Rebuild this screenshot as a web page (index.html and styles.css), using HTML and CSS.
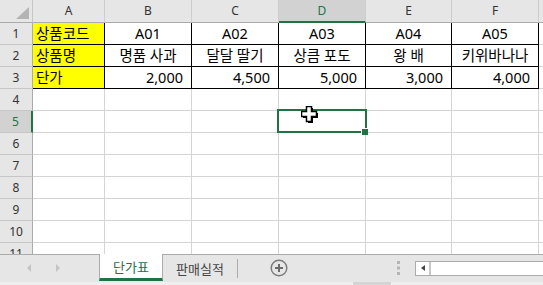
FILE: index.html
```html
<!DOCTYPE html>
<html lang="ko">
  <head>
    <meta charset="UTF-8">
    <title>단가표</title>
    <link rel="stylesheet" href="styles.css">
  </head>
  <body>
    <div class="sheet">
      <div class="grid">
        <div class="corner"><span class="tri"></span></div>
        <div class="col-h">A</div>
        <div class="col-h">B</div>
        <div class="col-h">C</div>
        <div class="col-h sel">D</div>
        <div class="col-h">E</div>
        <div class="col-h">F</div>
        <div class="col-h"></div>

        <div class="row-h">1</div>
        <div class="cell box key">상품코드</div>
        <div class="cell box mid">A01</div>
        <div class="cell box mid">A02</div>
        <div class="cell box mid">A03</div>
        <div class="cell box mid">A04</div>
        <div class="cell box mid">A05</div>
        <div class="cell"></div>

        <div class="row-h">2</div>
        <div class="cell box key">상품명</div>
        <div class="cell box mid">명품 사과</div>
        <div class="cell box mid">달달 딸기</div>
        <div class="cell box mid">상큼 포도</div>
        <div class="cell box mid">왕 배</div>
        <div class="cell box mid">키위바나나</div>
        <div class="cell"></div>

        <div class="row-h">3</div>
        <div class="cell box key">단가</div>
        <div class="cell box num">2,000</div>
        <div class="cell box num">4,500</div>
        <div class="cell box num">5,000</div>
        <div class="cell box num">3,000</div>
        <div class="cell box num">4,000</div>
        <div class="cell"></div>

        <div class="row-h">4</div>
        <div class="cell"></div><div class="cell"></div><div class="cell"></div><div class="cell"></div>
        <div class="cell"></div><div class="cell"></div><div class="cell"></div>

        <div class="row-h sel">5</div>
        <div class="cell"></div><div class="cell"></div><div class="cell"></div><div class="cell"></div>
        <div class="cell"></div><div class="cell"></div><div class="cell"></div>

        <div class="row-h">6</div>
        <div class="cell"></div><div class="cell"></div><div class="cell"></div><div class="cell"></div>
        <div class="cell"></div><div class="cell"></div><div class="cell"></div>

        <div class="row-h">7</div>
        <div class="cell"></div><div class="cell"></div><div class="cell"></div><div class="cell"></div>
        <div class="cell"></div><div class="cell"></div><div class="cell"></div>

        <div class="row-h">8</div>
        <div class="cell"></div><div class="cell"></div><div class="cell"></div><div class="cell"></div>
        <div class="cell"></div><div class="cell"></div><div class="cell"></div>

        <div class="row-h">9</div>
        <div class="cell"></div><div class="cell"></div><div class="cell"></div><div class="cell"></div>
        <div class="cell"></div><div class="cell"></div><div class="cell"></div>

        <div class="row-h">10</div>
        <div class="cell"></div><div class="cell"></div><div class="cell"></div><div class="cell"></div>
        <div class="cell"></div><div class="cell"></div><div class="cell"></div>

        <div class="row-h">11</div>
        <div class="cell"></div><div class="cell"></div><div class="cell"></div><div class="cell"></div>
        <div class="cell"></div><div class="cell"></div><div class="cell"></div>
      </div>

      <!-- active cell D5 -->
      <div class="selection"></div>
      <div class="handle"></div>
      <svg class="cursor" width="19" height="19" viewBox="0 0 19 19">
        <polygon points="7,2 12,2 12,7 17,7 17,12 12,12 12,17 7,17 7,12 2,12 2,7 7,7" fill="#000"/>
        <polygon points="5.5,0.5 10.5,0.5 10.5,5.5 15.5,5.5 15.5,10.5 10.5,10.5 10.5,15.5 5.5,15.5 5.5,10.5 0.5,10.5 0.5,5.5 5.5,5.5" fill="#fff" stroke="#000" stroke-width="1.5"/>
      </svg>

      <div class="tabbar">
        <div class="tabrow">
          <div class="nav">
            <span class="arrow-left"></span>
            <span class="arrow-right"></span>
          </div>
          <div class="tab active">단가표</div>
          <div class="tab">판매실적</div>
          <div class="sep"></div>
          <svg class="add" width="18" height="18" viewBox="0 0 18 18">
            <circle cx="9" cy="9" r="7.8" fill="none" stroke="#7a7a7a" stroke-width="1.4"/>
            <path d="M9 5v8M5 9h8" stroke="#6a6a6a" stroke-width="2"/>
          </svg>
          <svg class="dots" width="3" height="14" viewBox="0 0 3 14">
            <rect x="0" y="0" width="3" height="3" fill="#b5b5b5"/>
            <rect x="0" y="5.5" width="3" height="3" fill="#b5b5b5"/>
            <rect x="0" y="11" width="3" height="3" fill="#b5b5b5"/>
          </svg>
          <div class="hscroll">
            <div class="hscroll-btn"><span class="arrow-small"></span></div>
          </div>
        </div>
        <div class="strip"><span class="thumb"></span></div>
      </div>
    </div>
  </body>
</html>
```

FILE: styles.css
```css
body {
  margin: 0;
  font-family: "Noto Sans", "Noto Sans CJK KR", sans-serif;
  background-color: #fff;
  overflow: hidden;
}

.sheet {
  position: relative;
  width: 543px;
  height: 285px;
  overflow: hidden;
}

.grid {
  display: grid;
  grid-template-columns: 33px 72px 87px 87px 87px 86px 87px 1fr;
  grid-template-rows: 23px;
  grid-auto-rows: 22px;
  height: 254px;
  overflow: hidden;
}

.grid > div {
  box-sizing: border-box;
  border-right: 1px solid #d4d4d4;
  border-bottom: 1px solid #d4d4d4;
  white-space: nowrap;
  overflow: hidden;
}

.corner {
  display: flex;
  align-items: flex-end;
  justify-content: flex-end;
  padding: 0 3px 3px 0;
  background-color: #e6e6e6;
  border-right-color: #c6c6c6 !important;
  border-bottom-color: #ababab !important;
}

.tri {
  width: 0;
  height: 0;
  border-left: 13px solid transparent;
  border-bottom: 12px solid #b4b4b4;
}

.col-h {
  background-color: #e6e6e6;
  border-right-color: #cdcdcd !important;
  border-bottom-color: #ababab !important;
  color: #333;
  font-size: 12px;
  line-height: 22px;
  text-align: center;
}

.col-h.sel {
  background-color: #d2d2d2;
  color: #217346;
  border-bottom: 2px solid #217346 !important;
}

.row-h {
  background-color: #e6e6e6;
  border-right-color: #ababab !important;
  border-bottom-color: #c6c6c6 !important;
  color: #333;
  font-size: 12px;
  line-height: 21px;
  text-align: center;
}

.row-h.sel {
  background-color: #d2d2d2;
  color: #217346;
  border-right: 2px solid #217346 !important;
}

.cell {
  font-size: 14.5px;
  line-height: 21px;
  color: #000;
  padding: 0 3px;
}

.cell.box {
  border-right-color: #000;
  border-bottom-color: #000;
}

.key {
  background-color: #ffff00;
}

.mid {
  text-align: center;
}

.num {
  text-align: right;
  padding-right: 8px;
}

.selection {
  position: absolute;
  left: 277px;
  top: 109px;
  width: 90px;
  height: 24px;
  box-sizing: border-box;
  border: 2px solid #217346;
}

.handle {
  position: absolute;
  left: 361px;
  top: 128px;
  width: 6px;
  height: 6px;
  background-color: #217346;
  border-top: 1px solid #fff;
  border-left: 1px solid #fff;
}

.cursor {
  position: absolute;
  left: 301px;
  top: 106px;
}

.tabbar {
  height: 31px;
  box-sizing: border-box;
  background-color: #e6e6e6;
  border-top: 1px solid #ababab;
}

.tabrow {
  display: flex;
  align-items: center;
  height: 26px;
}

.nav {
  display: flex;
  align-items: center;
  gap: 25px;
  width: 99px;
  padding-left: 27px;
  box-sizing: border-box;
}

.arrow-left {
  width: 0;
  height: 0;
  border-top: 4px solid transparent;
  border-bottom: 4px solid transparent;
  border-right: 4px solid #c4c4c4;
}

.arrow-right {
  width: 0;
  height: 0;
  border-top: 4px solid transparent;
  border-bottom: 4px solid transparent;
  border-left: 4px solid #c4c4c4;
}

.tab {
  display: flex;
  align-items: center;
  justify-content: center;
  align-self: stretch;
  width: 74px;
  font-size: 13px;
  color: #444;
}

.tab.active {
  width: 64px;
  margin-top: -1px;
  box-sizing: border-box;
  background-color: #fff;
  color: #217346;
  border-left: 1px solid #ababab;
  border-right: 1px solid #ababab;
  border-bottom: 3px solid #217346;
  padding-top: 1px;
}

.sep {
  width: 1px;
  height: 19px;
  background-color: #ababab;
}

.add {
  margin-left: 32px;
}

.dots {
  margin-left: 109px;
}

.hscroll {
  flex: 1;
  height: 15px;
  margin-left: 15px;
  margin-right: -4px;
  display: flex;
  background-color: #fff;
  border: 1px solid #ababab;
  box-sizing: border-box;
}

.hscroll-btn {
  display: flex;
  align-items: center;
  justify-content: center;
  width: 13px;
  border-right: 2px solid #c8c8c8;
}

.arrow-small {
  width: 0;
  height: 0;
  border-top: 3.5px solid transparent;
  border-bottom: 3.5px solid transparent;
  border-right: 4px solid #444;
}

.strip {
  display: flex;
  height: 3px;
  margin-top: 1px;
  background-color: #efefef;
}

.thumb {
  width: 38px;
  margin-left: 353px;
  background-color: #d4d4d4;
}
```
